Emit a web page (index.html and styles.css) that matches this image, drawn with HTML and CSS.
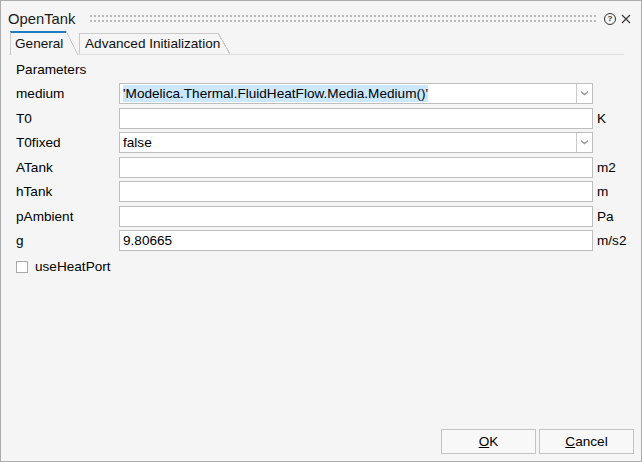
FILE: index.html
```html
<!DOCTYPE html>
<html lang="en">
<head>
    <meta charset="UTF-8">
    <title>OpenTank</title>
    <link rel="stylesheet" href="styles.css">
</head>
<body>
    <div class="window">
        <div class="titlebar">
            <span class="title">OpenTank</span>
            <span class="grip"></span>
            <span class="help">?</span>
            <svg class="close" width="10" height="10" viewBox="0 0 10 10">
                <path d="M1 1 L9 9 M9 1 L1 9" stroke="#333" stroke-width="1.1" fill="none"/>
            </svg>
        </div>
        <div class="tabbar">
            <div class="tab active">General</div>
            <div class="tab wide">Advanced Initialization</div>
        </div>
        <div class="panel">
            <div class="section">Parameters</div>
            <div class="params">
                <label>medium</label>
                <div class="field combo">
                    <span class="value"><span class="selected">'Modelica.Thermal.FluidHeatFlow.Media.Medium()'</span></span>
                    <span class="drop"><svg width="7" height="5" viewBox="0 0 7 5"><polygon points="0,0 3.5,2.5 7,0 7,1.6 3.5,4.5 0,1.6" fill="#9a9a9a"/></svg></span>
                </div>
                <span class="unit"></span>

                <label>T0</label>
                <div class="field"></div>
                <span class="unit">K</span>

                <label>T0fixed</label>
                <div class="field combo">
                    <span class="value">false</span>
                    <span class="drop"><svg width="7" height="5" viewBox="0 0 7 5"><polygon points="0,0 3.5,2.5 7,0 7,1.6 3.5,4.5 0,1.6" fill="#9a9a9a"/></svg></span>
                </div>
                <span class="unit"></span>

                <label>ATank</label>
                <div class="field"></div>
                <span class="unit">m2</span>

                <label>hTank</label>
                <div class="field"></div>
                <span class="unit">m</span>

                <label>pAmbient</label>
                <div class="field"></div>
                <span class="unit">Pa</span>

                <label>g</label>
                <div class="field"><span class="value">9.80665</span></div>
                <span class="unit">m/s2</span>
            </div>
            <div class="check">
                <span class="box"></span>
                <span>useHeatPort</span>
            </div>
        </div>
        <div class="footer">
            <button><u>O</u>K</button>
            <button><u>C</u>ancel</button>
        </div>
    </div>
</body>
</html>
```

FILE: styles.css
```css
body {
    margin: 0;
    font-family: "Liberation Sans", Arial, sans-serif;
    font-size: 13.6px;
    color: #000;
    background-color: #f5f5f5;
}

.window {
    width: 640px;
    height: 460px;
    border: 1px solid #acacac;
    background-color: #f5f5f5;
    display: flex;
    flex-direction: column;
}

/* title bar */
.titlebar {
    height: 25px;
    padding-top: 5px;
    display: flex;
    align-items: center;
}

.title {
    width: 89px;
    padding-left: 7px;
    box-sizing: border-box;
    font-size: 14.8px;
    color: #1a1a1a;
}

.grip {
    width: 508px;
    height: 7px;
    background:
        linear-gradient(90deg, #b8b8b8 2px, transparent 2px) 0 0 / 4px 2px repeat-x,
        linear-gradient(90deg, #b8b8b8 2px, transparent 2px) 0 5px / 4px 2px repeat-x;
}

.help {
    width: 10px;
    height: 10px;
    margin-left: 6px;
    border: 1px solid #333;
    border-radius: 50%;
    font-size: 8px;
    font-weight: bold;
    line-height: 10px;
    text-align: center;
    color: #333;
}

.close {
    margin-left: 5px;
}

/* tabs */
.tabbar {
    height: 23px;
    margin: 0 17px 0 8px;
    padding-left: 1px;
    display: flex;
    align-items: flex-end;
    border-bottom: 1px solid #dedede;
}

.tab {
    position: relative;
    width: 56px;
    height: 21px;
    margin-right: 13px;
    padding-left: 5px;
    box-sizing: border-box;
    border-left: 1px solid #c9c9c9;
    border-top: 1px solid #c9c9c9;
    line-height: 20px;
    white-space: nowrap;
    color: #111;
}

.tab::after {
    content: "";
    position: absolute;
    top: -1px;
    right: -12px;
    width: 12px;
    bottom: 0;
    background: linear-gradient(to top right, transparent calc(50% - 0.6px), #c9c9c9 calc(50% - 0.6px), #c9c9c9 calc(50% + 0.6px), transparent calc(50% + 0.6px));
}

.tab.active {
    height: 24px;
    margin-bottom: -1px;
    padding-left: 4px;
    border-top: 2px solid #1c7cc0;
    background-color: #f5f5f5;
    line-height: 21px;
}

.tab.active::after {
    top: -2px;
    background: linear-gradient(to top right, #f5f5f5 calc(50% - 0.6px), #c9c9c9 calc(50% - 0.6px), #c9c9c9 calc(50% + 0.6px), transparent calc(50% + 0.6px));
}

.tab.wide {
    width: 139px;
}

/* parameter panel */
.panel {
    padding: 7px 0 0 15px;
}

.section {
    line-height: 15px;
    margin-bottom: 6px;
}

.params {
    display: grid;
    grid-template-columns: 103px 474px auto;
    grid-auto-rows: 21px;
    row-gap: 3.5px;
    align-items: center;
}

.unit {
    padding-left: 4px;
}

.field {
    height: 21px;
    box-sizing: border-box;
    border: 1px solid #bdbdbd;
    background-color: #fff;
    display: flex;
    align-items: center;
}

.value {
    padding-left: 3px;
    flex: 1;
}

.selected {
    display: inline-block;
    line-height: 17px;
    background-color: #cce8ff;
}

.drop {
    width: 15px;
    height: 19px;
    border-left: 1px solid #c9c9c9;
    display: flex;
    align-items: center;
    justify-content: center;
}

.check {
    margin-top: 8px;
    display: flex;
    align-items: center;
    gap: 7px;
}

.box {
    width: 10px;
    height: 10px;
    border: 1px solid #a9a9a9;
    background-color: #fff;
}

/* buttons */
.footer {
    margin-top: auto;
    padding: 0 7px 7px 0;
    display: flex;
    justify-content: flex-end;
    gap: 3px;
}

button {
    width: 95px;
    height: 25px;
    border: 1px solid #c3c3c3;
    border-radius: 0;
    background-color: #f8f8f8;
    font-family: "Liberation Sans", Arial, sans-serif;
    font-size: 13.6px;
    color: #000;
}
```
